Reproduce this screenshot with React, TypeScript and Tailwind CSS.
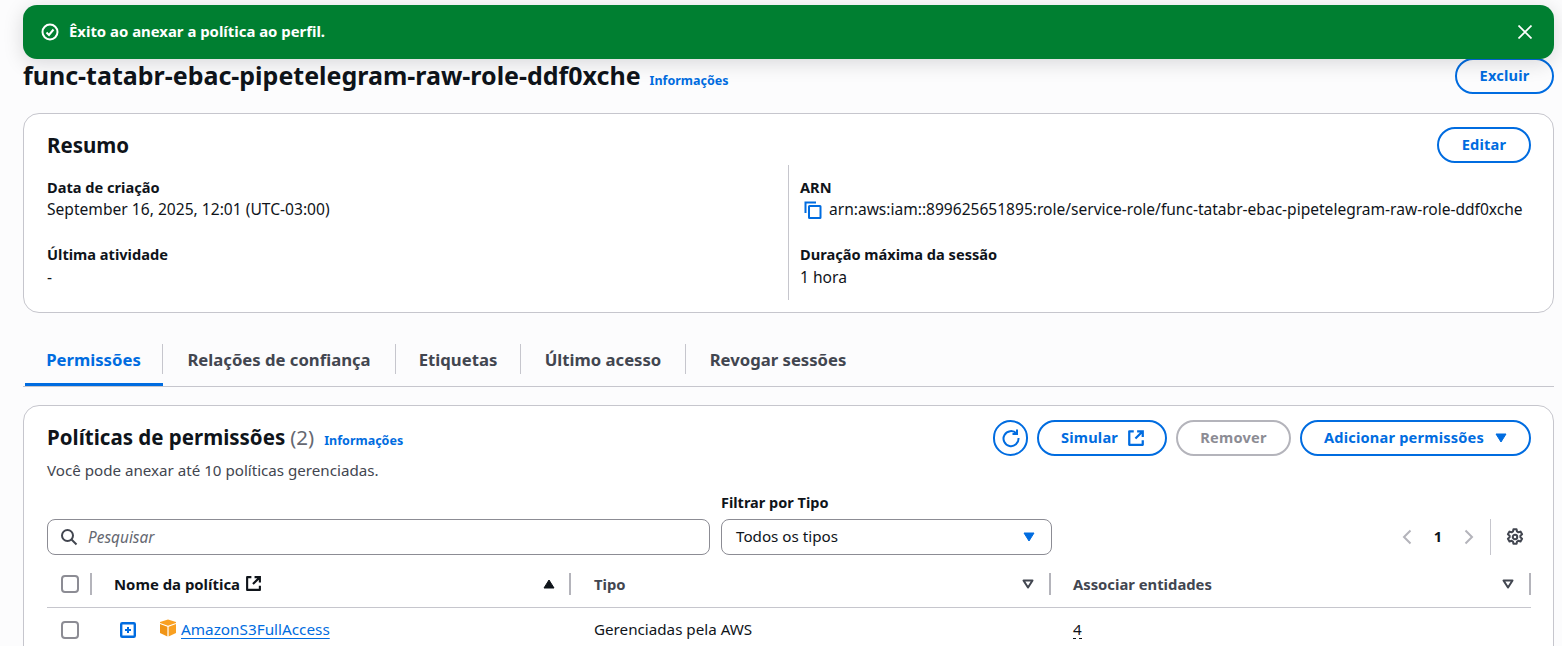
import React from "react";

const BLUE = "text-[#006ce0]";

function Pill({ children, className = "" }: { children: React.ReactNode; className?: string }) {
  return (
    <div className={`flex h-[36px] items-center justify-center rounded-[20px] border-2 border-[#006ce0] text-[14.6px] font-bold tracking-[0.2px] text-[#006ce0] ${className}`}>
      {children}
    </div>
  );
}

function External({ color = "#006ce0", size = 18 }: { color?: string; size?: number }) {
  return (
    <svg width={size} height={size} viewBox="0 0 16 16" fill="none" stroke={color} strokeWidth="2">
      <path d="M6 2H2v12h12v-4" strokeLinejoin="round" />
      <path d="M9 2h5v5M14 2L7.5 8.5" />
    </svg>
  );
}

function Caret({ className = "" }: { className?: string }) {
  return (
    <svg width="12" height="10" viewBox="0 0 12 10" className={className}>
      <path d="M1 1h10L6 9z" fill="currentColor" stroke="currentColor" strokeLinejoin="round" />
    </svg>
  );
}

function SortDown() {
  return (
    <svg width="12" height="10" viewBox="0 0 12 10" fill="none" stroke="#424650" strokeWidth="2" strokeLinejoin="round">
      <path d="M1.5 1.5h9L6 8.5z" />
    </svg>
  );
}

function Checkbox() {
  return <div className="h-[18px] w-[18px] rounded-[4px] border-2 border-[#8c8c94] bg-white" />;
}

function Divider() {
  return <div className="h-[22px] w-[2px] bg-[#b4b4bb]" />;
}

function Tab({ children, active = false, width, last = false }: { children: React.ReactNode; active?: boolean; width: string; last?: boolean }) {
  return (
    <div className={`flex h-[47px] items-start pt-[5px] ${width} ${active ? "border-b-[3px] border-[#006ce0]" : ""}`}>
      <div className={`flex h-[30px] w-full items-center justify-center pt-[1px] ${last ? "" : "border-r border-[#c6c6cd]"} text-[16.7px] font-bold ${active ? "text-[#006ce0]" : "text-[#424650]"}`}>
        {children}
      </div>
    </div>
  );
}

function Label({ children }: { children: React.ReactNode }) {
  return <div className="text-[14.6px] font-bold leading-[20px] text-[#0f141a]">{children}</div>;
}

function Value({ children, className = "mt-[2px]" }: { children: React.ReactNode; className?: string }) {
  return <div className={`text-[15.6px] leading-[22px] text-[#0f141a] ${className}`}>{children}</div>;
}

export default function App() {
  return (
    <div
      className="relative h-[646px] w-[1562px] overflow-hidden bg-[#fcfcfd] pl-[23px] pr-[8px] text-[#0f141a]"
      style={{ fontFamily: '"Noto Sans", sans-serif' }}
    >
      {/* Toast */}
      <div className="absolute left-[23px] top-[5px] z-10 flex h-[54px] w-[1531px] items-center justify-between rounded-[14px] bg-[#007f31] pl-[18px] pr-[22px] text-white shadow-[0_4px_20px_rgba(0,7,22,0.15)]">
        <div className="flex items-center gap-[10px]">
          <svg width="18" height="18" viewBox="0 0 18 18" fill="none" stroke="white" strokeWidth="2">
            <circle cx="9" cy="9" r="7.5" />
            <path d="M5.5 9.5l2.5 2.5 4.5-5.5" />
          </svg>
          <span className="pb-[2px] text-[14.9px] font-bold">Êxito ao anexar a política ao perfil.</span>
        </div>
        <svg width="14" height="14" viewBox="0 0 14 14" stroke="white" strokeWidth="1.7" fill="none">
          <path d="M0.5 0.5l13 13M13.5 0.5l-13 13" />
        </svg>
      </div>

      {/* Title row */}
      <div className="mt-[58px] flex h-[36px] items-center justify-between">
        <div className="flex items-baseline gap-[9px] pb-[2px]">
          <h1 className="text-[25px] font-bold leading-[36px]">func-tatabr-ebac-pipetelegram-raw-role-ddf0xche</h1>
          <span className={`text-[12.5px] font-bold ${BLUE}`}>Informações</span>
        </div>
        <Pill className="w-[99px]">Excluir</Pill>
      </div>

      {/* Summary */}
      <div className="mt-[19px] h-[200px] rounded-[16px] border border-[#c6c6cd] bg-white pl-[23px] pr-[22px] pt-[13px]">
        <div className="flex h-[36px] items-center justify-between">
          <div className="text-[20.5px] font-bold">Resumo</div>
          <Pill className="w-[94px]">Editar</Pill>
        </div>
        <div className="mt-[2px] grid h-[135px] grid-cols-[742px_1fr]">
          <div className="border-r border-[#c6c6cd] pt-[12px]">
            <Label>Data de criação</Label>
            <Value className="mt-[1px]">September 16, 2025, 12:01 (UTC-03:00)</Value>
            <div className="mt-[24px]">
              <Label>Última atividade</Label>
              <Value className="mt-[2px]">-</Value>
            </div>
          </div>
          <div className="pl-[11px] pt-[12px]">
            <Label>ARN</Label>
            <div className="mt-[2px] flex h-[22px] items-center gap-[7px] pl-[4px] text-[15.55px]">
              <svg width="18" height="18" viewBox="0 0 18 18" fill="none" stroke="#006ce0" strokeWidth="2" className="shrink-0">
                <path d="M1.5 12V1.5H12" />
                <rect x="5" y="5" width="11.5" height="12" rx="0.5" />
              </svg>
              <span className="whitespace-nowrap">arn:aws:iam::899625651895:role/service-role/func-tatabr-ebac-pipetelegram-raw-role-ddf0xche</span>
            </div>
            <div className="mt-[23px]">
              <Label>Duração máxima da sessão</Label>
              <Value className="mt-[2px]">1 hora</Value>
            </div>
          </div>
        </div>
      </div>

      {/* Tabs */}
      <div className="mt-[26px] flex border-b border-[#c6c6cd] pl-[2px]">
        <Tab active width="w-[138px]">Permissões</Tab>
        <Tab width="w-[233px]">Relações de confiança</Tab>
        <Tab width="w-[125px]">Etiquetas</Tab>
        <Tab width="w-[165px]">Último acesso</Tab>
        <Tab last width="w-[184px]">Revogar sessões</Tab>
      </div>

      {/* Policies */}
      <div className="mt-[18px] h-[300px] rounded-[16px] border border-[#c6c6cd] bg-white pl-[23px] pr-[22px] pt-[14px]">
        <div className="flex h-[36px] items-center justify-between">
          <div className="flex items-baseline pb-[2px]">
            <span className="text-[20.5px] font-bold">Políticas de permissões</span>
            <span className="ml-[5px] text-[20.5px] text-[#656871]">(2)</span>
            <span className={`ml-[10px] text-[12.5px] font-bold ${BLUE}`}>Informações</span>
          </div>
          <div className="flex items-center gap-[9px]">
            <div className="flex h-[36px] w-[35px] items-center justify-center rounded-full border-2 border-[#006ce0]">
              <svg width="20" height="20" viewBox="0 0 20 20" fill="none" stroke="#006ce0" strokeWidth="2">
                <path d="M15.5 5.5A7.5 7.5 0 1 0 17.5 10" />
                <path d="M16 1.5v4.5h-4.5" />
              </svg>
            </div>
            <Pill className="w-[130px] gap-[9px] pl-[2px]">
              Simular <External />
            </Pill>
            <div className="flex h-[36px] w-[115px] items-center justify-center rounded-[20px] border-2 border-[#b4b4bb] text-[14.6px] font-bold tracking-[0.2px] text-[#8c8c94]">
              Remover
            </div>
            <Pill className="w-[231px] gap-[11px]">
              Adicionar permissões <Caret />
            </Pill>
          </div>
        </div>
        <div className="mt-[3px] text-[15.15px] leading-[22px] text-[#424650]">Você pode anexar até 10 políticas gerenciadas.</div>

        {/* Filters */}
        <div className="mt-[11px] flex items-end">
          <div className="flex h-[36px] w-[663px] items-center gap-[10px] rounded-[8px] border border-[#8c8c94] bg-white pl-[12px]">
            <svg width="18" height="18" viewBox="0 0 18 18" fill="none" stroke="#424650" strokeWidth="2">
              <circle cx="7.5" cy="7.5" r="5.5" />
              <path d="M11.5 11.5l5 5" />
            </svg>
            <span className="pt-[1px] text-[15.4px] italic text-[#656871]">Pesquisar</span>
          </div>
          <div className="ml-[11px] w-[331px]">
            <div className="mb-[7px] text-[14.5px] font-bold leading-[20px]">Filtrar por Tipo</div>
            <div className="flex h-[36px] items-center justify-between rounded-[8px] border border-[#8c8c94] bg-white pb-[1px] pl-[14px] pr-[16px] text-[15.2px]">
              Todos os tipos
              <Caret className={BLUE} />
            </div>
          </div>
          <div className="ml-auto flex h-[36px] items-center">
            <svg width="10" height="16" viewBox="0 0 10 16" fill="none" stroke="#b4b4bb" strokeWidth="2">
              <path d="M8.5 1.5L2 8l6.5 6.5" />
            </svg>
            <span className="mx-[22px] text-[14.6px] font-bold">1</span>
            <svg width="10" height="16" viewBox="0 0 10 16" fill="none" stroke="#b4b4bb" strokeWidth="2">
              <path d="M1.5 1.5L8 8l-6.5 6.5" />
            </svg>
            <div className="ml-[16px] h-[36px] w-px bg-[#c6c6cd]" />
            <svg className="ml-[15px] mr-[7px]" width="18" height="18" viewBox="0 0 16 16" fill="none" stroke="#424650" strokeWidth="1.8" strokeLinejoin="round">
              <circle cx="8" cy="8" r="2" />
              <path d="M6.6 1.2h2.8l.4 1.9 1.2.7 1.9-.6 1.4 2.4-1.5 1.3v1.4l1.5 1.3-1.4 2.4-1.9-.6-1.2.7-.4 1.9H6.6l-.4-1.9-1.2-.7-1.9.6-1.4-2.4 1.5-1.3V6.9L1.7 5.6l1.4-2.4 1.9.6 1.2-.7z" />
            </svg>
          </div>
        </div>

        {/* Table */}
        <div className="mt-[6px] grid grid-cols-[45px_479px_480px_480px]">
          <div className="flex h-[47px] items-center justify-between border-b border-[#c6c6cd] pl-[14px]">
            <Checkbox />
            <Divider />
          </div>
          <div className="flex h-[47px] items-center justify-between border-b border-[#c6c6cd] pl-[22px]">
            <span className="flex items-center gap-[5px] text-[14.9px] font-bold">
              Nome da política <External color="#0f141a" size={17} />
            </span>
            <span className="flex items-center gap-[14px]">
              <Caret className="rotate-180 text-[#0f141a]" />
              <Divider />
            </span>
          </div>
          <div className="flex h-[47px] items-center justify-between border-b border-[#c6c6cd] pl-[23px]">
            <span className="text-[14.8px] font-bold text-[#424650]">Tipo</span>
            <span className="flex items-center gap-[15px]">
              <SortDown />
              <Divider />
            </span>
          </div>
          <div className="flex h-[47px] items-center justify-between border-b border-[#c6c6cd] pl-[22px]">
            <span className="text-[14.8px] font-bold text-[#424650]">Associar entidades</span>
            <span className="flex items-center gap-[15px]">
              <SortDown />
              <Divider />
            </span>
          </div>

          <div className="flex h-[44px] items-center pl-[14px]">
            <Checkbox />
          </div>
          <div className="flex h-[44px] items-center pl-[28px]">
            <svg width="16" height="16" viewBox="0 0 16 16" fill="none" stroke="#006ce0" strokeWidth="2.4">
              <rect x="1.2" y="1.2" width="13.6" height="13.6" rx="1" />
              <path d="M8 5v6M5 8h6" strokeWidth="2" />
            </svg>
            <svg className="ml-[23px] mb-[4px]" width="18" height="18" viewBox="0 0 18 18">
              <path d="M9 0.5L1 3v1l8 2.8L17 4V3z" fill="#f9a021" />
              <path d="M1 5v9l7.4 3.5V7.8z" fill="#f09415" />
              <path d="M17 5v9l-7.4 3.5V7.8z" fill="#f9a021" />
            </svg>
            <span className="mb-[2px] ml-[4px] text-[15.3px] text-[#006ce0] underline underline-offset-[3px]">AmazonS3FullAccess</span>
          </div>
          <div className="flex h-[44px] items-center pb-[2px] pl-[23px] text-[15.2px]">Gerenciadas pela AWS</div>
          <div className="flex h-[44px] items-center pb-[2px] pl-[22px] text-[15.2px]">
            <span className="border-b border-dashed border-[#0f141a] leading-[18px]">4</span>
          </div>
        </div>
      </div>
    </div>
  );
}
